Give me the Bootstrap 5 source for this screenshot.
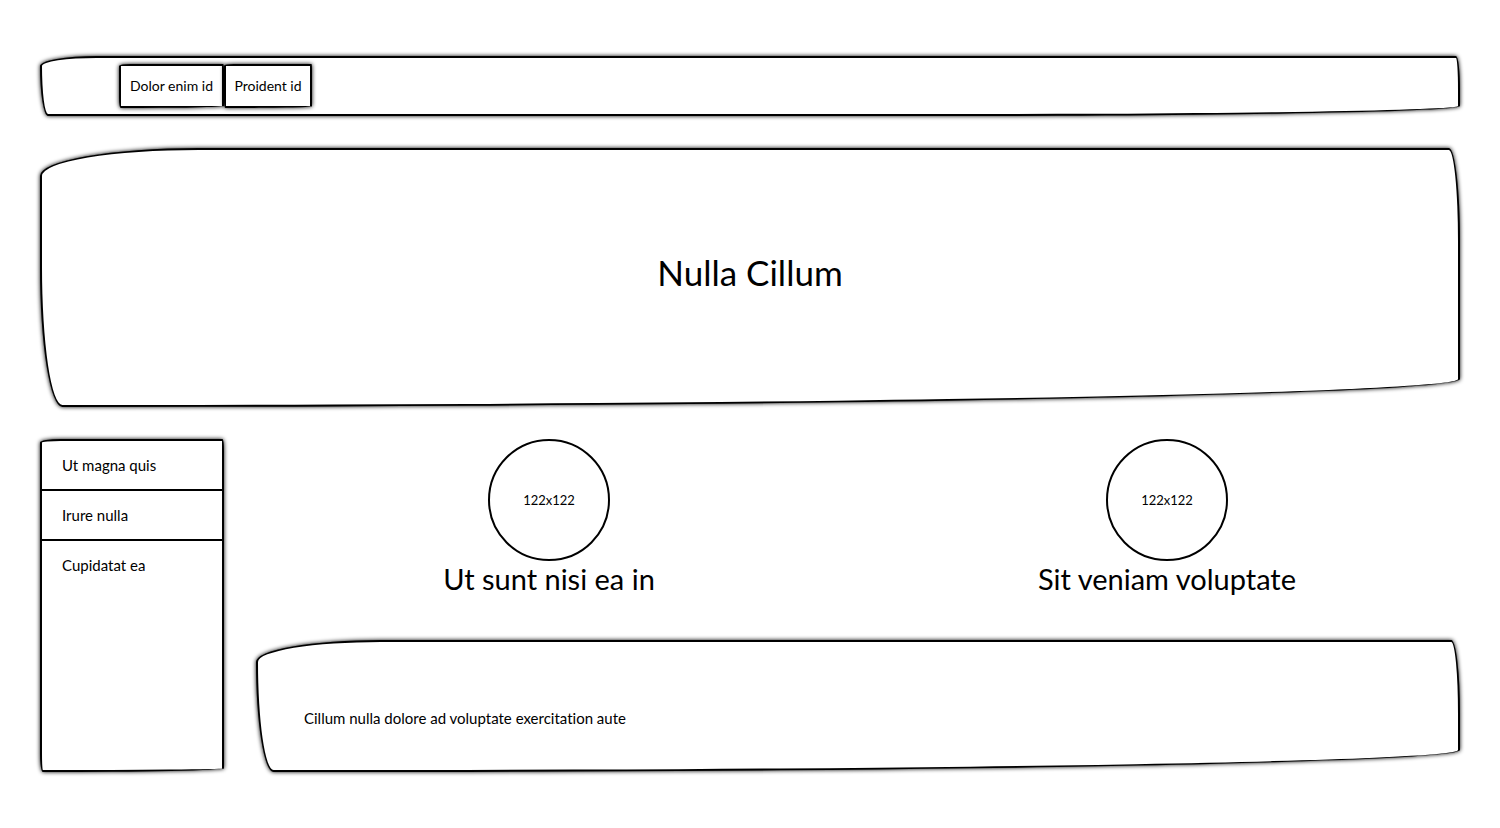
<!DOCTYPE html>
<html lang="en">
<head>
<meta charset="utf-8">
<meta name="viewport" content="width=device-width, initial-scale=1">
<title>Nulla Cillum</title>
<link href="https://cdn.jsdelivr.net/npm/bootstrap@5.3.0/dist/css/bootstrap.min.css" rel="stylesheet">
<style>
body { font-family: Lato, "Liberation Sans", sans-serif; font-size: 15px; line-height: 24px; font-variant-ligatures: none; color: #000; background: #fff; }
.page { padding: 56px 40px; gap: 32px; }
.sketch { border: 2px solid #000; border-radius: 170px 12px 1500px 24px / 30px 100px 30px 150px; box-shadow: 0 0 4px #000; background: #fff; }
.topbar { padding: 6px 77px; }
.tab-link { padding: 8px 0; color: #000; text-decoration: none; text-align: center; white-space: nowrap; font-size: 14px; }
.tab-wide { width: 105px; }
.tab-slim { width: 88px; }
.hero { min-height: 259px; padding-bottom: 12px; }
.hero h1 { font-size: 35px; line-height: 48px; }
.middle { gap: 32px; }
.side { width: 184px; overflow: hidden; }
.side a { padding: 12px 20px; color: #000; text-decoration: none; border-bottom: 2px solid #000; }
.side a:last-child { border-bottom: 0; }
.features { gap: 32px; padding-bottom: 20px; }
.disc { width: 122px; height: 122px; border: 2px solid #000; font-size: 13px; }
.features h2 { font-size: 29px; line-height: 35px; }
.note { padding: 64px 46px 40px; }
</style>
</head>
<body>
<div class="page d-flex flex-column">
  <nav class="sketch topbar d-flex">
    <a class="sketch tab-link tab-wide" href="#">Dolor enim id</a>
    <a class="sketch tab-link tab-slim" href="#">Proident id</a>
  </nav>
  <header class="sketch hero d-flex align-items-center justify-content-center">
    <h1 class="m-0 fw-normal">Nulla Cillum</h1>
  </header>
  <div class="middle d-flex">
    <aside class="sketch side flex-shrink-0 d-flex flex-column">
      <a href="#">Ut magna quis</a>
      <a href="#">Irure nulla</a>
      <a href="#">Cupidatat ea</a>
    </aside>
    <main class="flex-grow-1 d-flex flex-column gap-4">
      <div class="features d-flex">
        <section class="flex-fill w-50 d-flex flex-column align-items-center">
          <div class="disc rounded-circle d-flex align-items-center justify-content-center">122x122</div>
          <h2 class="m-0 fw-normal">Ut sunt nisi ea in</h2>
        </section>
        <section class="flex-fill w-50 d-flex flex-column align-items-center">
          <div class="disc rounded-circle d-flex align-items-center justify-content-center">122x122</div>
          <h2 class="m-0 fw-normal">Sit veniam voluptate</h2>
        </section>
      </div>
      <div class="sketch note">Cillum nulla dolore ad voluptate exercitation aute</div>
    </main>
  </div>
</div>
<script src="https://cdn.jsdelivr.net/npm/bootstrap@5.3.0/dist/js/bootstrap.bundle.min.js"></script>
</body>
</html>
